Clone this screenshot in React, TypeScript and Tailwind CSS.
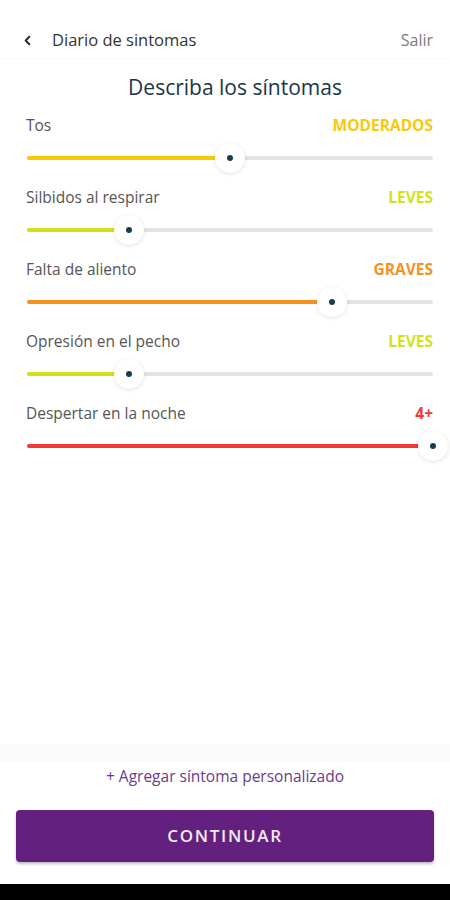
import { ChevronLeft } from 'lucide-react'

const symptoms = [
  { label: 'Tos', value: 'MODERADOS', level: 2, color: '#f7c90a' },
  { label: 'Silbidos al respirar', value: 'LEVES', level: 1, color: '#d2e11c' },
  { label: 'Falta de aliento', value: 'GRAVES', level: 3, color: '#f5921f' },
  { label: 'Opresión en el pecho', value: 'LEVES', level: 1, color: '#d2e11c' },
  { label: 'Despertar en la noche', value: '4+', level: 4, color: '#f23a36' },
]

function SymptomSlider({ level, color }: { level: number; color: string }) {
  const pct = (level / 4) * 100
  return (
    <div className="relative h-[44px] flex items-center">
      <div className="relative w-full h-[4px] rounded-full bg-[#e3e3e3]">
        <div
          className="absolute left-0 top-0 h-full rounded-full"
          style={{ width: `${pct}%`, backgroundColor: color }}
        />
        <div
          className="absolute top-1/2 -translate-x-1/2 -translate-y-1/2 w-[30px] h-[30px] rounded-full bg-white shadow-[0_1px_4px_rgba(0,0,0,0.12)] flex items-center justify-center"
          style={{ left: `${pct}%` }}
        >
          <div className="w-[6px] h-[6px] rounded-full bg-[#1d3b4c]" />
        </div>
      </div>
    </div>
  )
}

export default function App() {
  return (
    <div className="w-[450px] h-[900px] flex flex-col bg-white overflow-hidden font-['Open_Sans',sans-serif]">
      <div className="h-[58px] flex items-center justify-between pl-[20px] pr-[17px] pt-[22px] bg-white shadow-[0_1px_2px_rgba(0,0,0,0.03)]">
        <div className="flex items-center">
          <ChevronLeft className="w-[15px] h-[15px] text-[#2a2a2a]" strokeWidth={3} />
          <span className="ml-[17px] text-[16.5px] text-[#333]">Diario de sintomas</span>
        </div>
        <span className="text-[16px] text-[#7a7a7a]">Salir</span>
      </div>

      <div className="flex-1 flex flex-col pl-[27px] pr-[17px]">
        <div className="h-[58px] pt-[2px] flex items-center justify-center pl-[10px] text-[21px] text-[#1a3548]">
          Describa los síntomas
        </div>
        {symptoms.map((s) => (
          <div key={s.label} className="pb-[8px]">
            <div className="h-[20px] flex items-center justify-between">
              <span className="text-[15.5px] text-[#555] -ml-[1px]">{s.label}</span>
              <span className="text-[15.5px] font-bold" style={{ color: s.color }}>
                {s.value}
              </span>
            </div>
            <SymptomSlider level={s.level} color={s.color} />
          </div>
        ))}
      </div>

      <div className="h-[18px] bg-[#fafafa]" />
      <div className="flex flex-col items-center bg-white pb-[22px]">
        <div className="h-[30px] flex items-center text-[15.5px] text-[#6b3a8c]">
          + Agregar síntoma personalizado
        </div>
        <button className="mt-[18px] w-[418px] h-[52px] rounded-[4px] bg-[#63207f] text-[#f2eaf5] text-[17px] font-semibold tracking-[0.1em] shadow-[0_2px_3px_rgba(0,0,0,0.25)]">
          CONTINUAR
        </button>
      </div>
      <div className="h-[16px] bg-black" />
    </div>
  )
}
